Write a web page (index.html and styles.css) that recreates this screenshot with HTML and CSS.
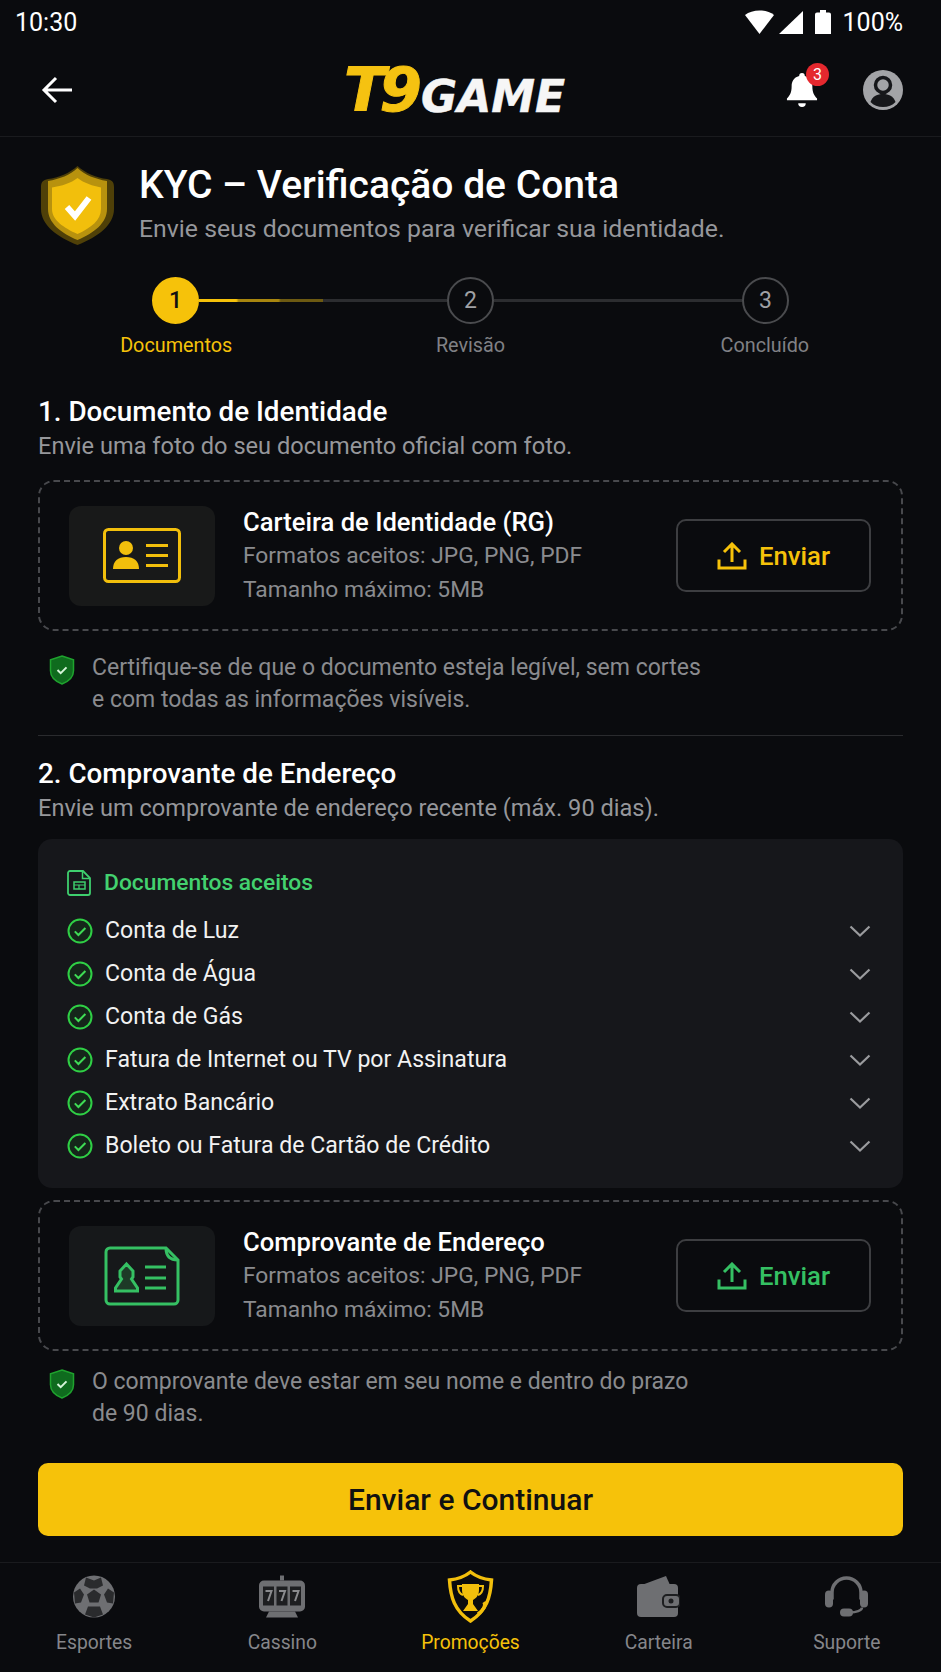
FILE: index.html
```html
<!DOCTYPE html>
<html lang="pt-BR">
<head>
  <meta charset="UTF-8">
  <title>KYC - Verificação de Conta</title>
  <link rel="stylesheet" href="styles.css">
</head>
<body>
  <svg class="defs" width="0" height="0">
    <defs>
      <symbol id="ok-shield" viewBox="0 0 26 30">
        <path d="M13 1l11.500 3.800v11c0 6-4.500 10.500-11.500 13.200C6 26.300 1.500 21.800 1.500 15.800v-11z" fill="#0f6b1e" stroke="#1fa32e" stroke-width="1.500"/>
        <path d="M8.500 15l3.200 3.200 5.800-5.800" fill="none" stroke="#d6f5da" stroke-width="2"/>
      </symbol>
      <symbol id="check" viewBox="0 0 26 26">
        <circle cx="13" cy="13" r="11.500" fill="#15261a" stroke="#2fcf45" stroke-width="2"/>
        <path d="M7.800 13.400l3.600 3.600 7-7" fill="none" stroke="#3fdc55" stroke-width="2"/>
      </symbol>
      <symbol id="chev" viewBox="0 0 22 14">
        <path d="M1.500 2.500l9.500 9 9.500-9" fill="none" stroke="#9a9b9e" stroke-width="2.200"/>
      </symbol>
      <symbol id="upload" viewBox="0 0 30 28">
        <path d="M15 20V3M7 10l8-8 8 8" fill="none" stroke="currentColor" stroke-width="3"/>
        <path d="M2 17.500V26h26v-8.500" fill="none" stroke="currentColor" stroke-width="3"/>
      </symbol>
    </defs>
  </svg>

  <div class="app">
    <!-- Status bar -->
    <div class="status">
      <span>10:30</span>
      <div class="status-right">
        <svg class="wifi" width="29" height="24" viewBox="0 0 29 24"><path d="M0 5C7-1 22-1 29 5L14.500 24z" fill="#fff"/></svg>
        <svg class="signal" width="24" height="23" viewBox="0 0 24 23"><path d="M24 0v23H0z" fill="#fff"/></svg>
        <svg class="batt" width="16" height="24" viewBox="0 0 16 24"><path d="M5 2.500V0h6v2.500h3a2 2 0 0 1 2 2V24H0V4.500a2 2 0 0 1 2-2z" fill="#fff"/></svg>
        <span>100%</span>
      </div>
    </div>

    <!-- Top bar -->
    <header class="topbar">
      <svg class="back" width="32" height="28" viewBox="0 0 32 28"><path d="M31 14H3M15 2L3 14l12 12" fill="none" stroke="#fff" stroke-width="3"/></svg>
      <div class="logo"><span class="logo-t9">T9</span><span class="logo-game">GAME</span></div>
      <div class="top-icons">
        <div class="bell">
          <svg width="32" height="36" viewBox="0 0 34 38"><path d="M17 1c2 0 3 1.400 3 3 6 1.500 8 6 8 11 0 7 2 10 5 13v2H1v-2c3-3 5-6 5-13 0-5 2-9.500 8-11 0-1.600 1-3 3-3z" fill="#fff"/><path d="M13 33h8a4 4 0 0 1-8 0z" fill="#fff"/></svg>
          <span class="badge">3</span>
        </div>
        <svg width="40" height="40" viewBox="0 0 40 40">
          <circle cx="20" cy="20" r="20" fill="#a3a4a7"/>
          <circle cx="20" cy="15" r="7.500" fill="none" stroke="#16171a" stroke-width="3.500"/>
          <path d="M7.500 32c2-6 7-8 12.500-8s10.500 2 12.500 8c-3 3.500-7.500 5-12.500 5s-9.500-1.500-12.500-5z" fill="#16171a"/>
        </svg>
      </div>
    </header>

    <main class="content">
      <div class="page-head">
        <svg class="head-shield" width="73" height="79" viewBox="0 0 73 79">
          <path d="M36.500 0C44 7 56 12 66 13c5 1 7 3 7 8v22c0 16-16 28-36.500 36C16 71 0 59 0 43V21c0-5 2-7 7-8C17 12 29 7 36.500 0z" fill="#4f4008"/>
          <path d="M36.500 2C44 9 54 13 66 15v28c0 14-13 24-29.500 31C20 67 7 57 7 43V15C19 13 29 9 36.500 2z" fill="#b8920e"/>
          <path d="M36.500 12C43 17 52 20 60 21.500V43c0 11-10 19-23.500 25C23 62 11 54 11 43V21.500C21 20 30 17 36.500 12z" fill="#f2bf0c"/>
          <path d="M26 41l8 9 14-18" fill="none" stroke="#fff" stroke-width="6"/>
        </svg>
        <div>
          <h1>KYC – Verificação de Conta</h1>
          <p class="page-sub">Envie seus documentos para verificar sua identidade.</p>
        </div>
      </div>

      <!-- Stepper -->
      <div class="stepper">
        <div class="dots">
          <span class="dot dot-on">1</span>
          <span class="step-line step-line-on"></span>
          <span class="dot">2</span>
          <span class="step-line"></span>
          <span class="dot">3</span>
        </div>
        <div class="step-labels">
          <span class="label-on">Documentos</span>
          <span>Revisão</span>
          <span>Concluído</span>
        </div>
      </div>

      <!-- Section 1 -->
      <h2 class="first">1. Documento de Identidade</h2>
      <p class="section-sub">Envie uma foto do seu documento oficial com foto.</p>

      <div class="upload-card">
        <div class="doc-box">
          <svg width="78" height="55" viewBox="0 0 78 55">
            <rect x="1.500" y="1.500" width="75" height="52" rx="4" fill="none" stroke="#f2bf0c" stroke-width="3"/>
            <circle cx="23" cy="20" r="7" fill="#f2bf0c"/>
            <path d="M10 41c0-8 5-12 13-12s13 4 13 12z" fill="#f2bf0c"/>
            <path d="M43 17.500h22M43 27.500h22M43 37.500h22" stroke="#f2bf0c" stroke-width="3"/>
          </svg>
        </div>
        <div class="doc-info">
          <h3>Carteira de Identidade (RG)</h3>
          <p>Formatos aceitos: JPG, PNG, PDF</p>
          <p>Tamanho máximo: 5MB</p>
        </div>
        <button class="send">
          <svg width="30" height="28"><use href="#upload"/></svg>
          Enviar
        </button>
      </div>

      <div class="note">
        <svg width="26" height="30"><use href="#ok-shield"/></svg>
        <p>Certifique-se de que o documento esteja legível, sem cortes<br>e com todas as informações visíveis.</p>
      </div>

      <hr class="divider">

      <!-- Section 2 -->
      <h2>2. Comprovante de Endereço</h2>
      <p class="section-sub">Envie um comprovante de endereço recente (máx. 90 dias).</p>

      <div class="accepted">
        <div class="accepted-head">
          <svg width="24" height="26" viewBox="0 0 24 26">
            <path d="M3 1h13l7 7v15a2 2 0 0 1-2 2H3a2 2 0 0 1-2-2V3a2 2 0 0 1 2-2z" fill="none" stroke="#3ecf6e" stroke-width="1.800"/>
            <path d="M15.500 1.500V8.500H22.500" fill="none" stroke="#3ecf6e" stroke-width="1.500"/>
            <rect x="7" y="12" width="11" height="7" fill="none" stroke="#3ecf6e" stroke-width="1.500"/>
            <path d="M7 15h11M12 15v4" stroke="#3ecf6e" stroke-width="1.200"/>
          </svg>
          <span>Documentos aceitos</span>
        </div>
        <ul class="accepted-list">
          <li><svg width="26" height="26"><use href="#check"/></svg><span>Conta de Luz</span><svg width="22" height="14"><use href="#chev"/></svg></li>
          <li><svg width="26" height="26"><use href="#check"/></svg><span>Conta de Água</span><svg width="22" height="14"><use href="#chev"/></svg></li>
          <li><svg width="26" height="26"><use href="#check"/></svg><span>Conta de Gás</span><svg width="22" height="14"><use href="#chev"/></svg></li>
          <li><svg width="26" height="26"><use href="#check"/></svg><span>Fatura de Internet ou TV por Assinatura</span><svg width="22" height="14"><use href="#chev"/></svg></li>
          <li><svg width="26" height="26"><use href="#check"/></svg><span>Extrato Bancário</span><svg width="22" height="14"><use href="#chev"/></svg></li>
          <li><svg width="26" height="26"><use href="#check"/></svg><span>Boleto ou Fatura de Cartão de Crédito</span><svg width="22" height="14"><use href="#chev"/></svg></li>
        </ul>
      </div>

      <div class="upload-card upload-card-2">
        <div class="doc-box">
          <svg width="76" height="60" viewBox="0 0 76 60">
            <path d="M6 2h56l12 12v40a4 4 0 0 1-4 4H6a4 4 0 0 1-4-4V6a4 4 0 0 1 4-4z" fill="none" stroke="#35c063" stroke-width="3"/>
            <path d="M62 2c0 8 4 12 12 12" fill="none" stroke="#35c063" stroke-width="3"/>
            <path d="M22.500 18l6.500 7v6l-1.500 2 6 9v3H11.500v-3l6-9-1.500-2v-6z" fill="#1d3a27" stroke="#35c063" stroke-width="3"/>
            <path d="M41 21h21M41 32h21M41 42h21" stroke="#35c063" stroke-width="3"/>
          </svg>
        </div>
        <div class="doc-info">
          <h3>Comprovante de Endereço</h3>
          <p>Formatos aceitos: JPG, PNG, PDF</p>
          <p>Tamanho máximo: 5MB</p>
        </div>
        <button class="send send-green">
          <svg width="30" height="28"><use href="#upload"/></svg>
          Enviar
        </button>
      </div>

      <div class="note note-2">
        <svg width="26" height="30"><use href="#ok-shield"/></svg>
        <p>O comprovante deve estar em seu nome e dentro do prazo<br>de 90 dias.</p>
      </div>

      <button class="continue">Enviar e Continuar</button>
    </main>

    <!-- Bottom nav -->
    <nav class="bottom-nav">
      <div class="nav-item">
        <svg width="42" height="42" viewBox="0 0 42 42">
          <circle cx="21" cy="21" r="21" fill="#6e6f72"/>
          <path d="M21 14l7 5-2.500 8h-9L14 19z" fill="#2a2b2d"/>
          <path d="M13 2l8 3 7-3 2 8-6 3h-7l-6-3zM1 17l6-4 4 6-3 8-6 1zM41 17l-6-4-4 6 3 8 6 1zM12 39l3-8h12l3 8-9 3z" fill="#2a2b2d"/>
        </svg>
        <span>Esportes</span>
      </div>
      <div class="nav-item">
        <svg width="46" height="42" viewBox="0 0 46 42">
          <path d="M21 0h4v5h-4z" fill="#6e6f72"/>
          <rect x="0" y="5" width="46" height="31" rx="5" fill="#6e6f72"/>
          <path d="M10 36h26l3 6H7z" fill="#6e6f72"/>
          <rect x="4" y="11" width="11" height="19" fill="#1d1e20"/>
          <rect x="17.500" y="11" width="11" height="19" fill="#1d1e20"/>
          <rect x="31" y="11" width="11" height="19" fill="#1d1e20"/>
          <path d="M6.500 15.500h6l-3.500 10M20 15.500h6l-3.500 10M33.500 15.500h6l-3.500 10" fill="none" stroke="#8a8b8e" stroke-width="2"/>
        </svg>
        <span>Cassino</span>
      </div>
      <div class="nav-item nav-item-on">
        <svg width="49" height="53" viewBox="0 0 49 53">
          <path d="M24.500 2c5 4 12 7 21 8-1 17-5 31-21 41C8.500 41 4.500 27 3.500 10c9-1 16-4 21-8z" fill="none" stroke="#f2bf0c" stroke-width="3.500"/>
          <path d="M16 14h17v6c0 6-4 9-6 10v4l5 7H17l5-7v-4c-2-1-6-4-6-10z" fill="#f2bf0c"/>
          <path d="M16 16h-4c0 5 2 8 5 9M33 16h4c0 5-2 8-5 9" fill="none" stroke="#f2bf0c" stroke-width="2"/>
          <path d="M38 32c2 3 0 8-6 12" fill="none" stroke="#f2bf0c" stroke-width="3.500"/>
        </svg>
        <span>Promoções</span>
      </div>
      <div class="nav-item">
        <svg width="43" height="41" viewBox="0 0 43 41">
          <path d="M2 10L29 0l4 9z" fill="#6e6f72"/>
          <rect x="0" y="8" width="41" height="33" rx="4" fill="#6e6f72"/>
          <rect x="26" y="19" width="17" height="12" rx="4" fill="#6e6f72" stroke="#1d1e20" stroke-width="2"/>
          <circle cx="34" cy="25" r="2.500" fill="#1d1e20"/>
        </svg>
        <span>Carteira</span>
      </div>
      <div class="nav-item">
        <svg width="43" height="42" viewBox="0 0 43 42">
          <path d="M7 24V17a14.500 14.500 0 0 1 29 0v7" fill="none" stroke="#6e6f72" stroke-width="3.500"/>
          <rect x="0" y="15" width="8" height="17" rx="4" fill="#6e6f72"/>
          <rect x="35" y="15" width="8" height="17" rx="4" fill="#6e6f72"/>
          <path d="M37 32c0 3-6 5-12 5" fill="none" stroke="#6e6f72" stroke-width="2.500"/>
          <rect x="15" y="33" width="13" height="8" rx="4" fill="#6e6f72"/>
        </svg>
        <span>Suporte</span>
      </div>
    </nav>
  </div>
</body>
</html>
```

FILE: styles.css
```css
* {
  box-sizing: border-box;
}
body {
  margin: 0;
  background: #0a0b0e;
  font-family: Roboto, "Liberation Sans", sans-serif;
  color: #fff;
}
h1, h2, h3, p, ul {
  margin: 0;
  padding: 0;
}
.defs {
  display: block;
  height: 0;
}
.app {
  width: 941px;
  height: 1672px;
  display: flex;
  flex-direction: column;
  overflow: hidden;
}

/* status + top bar */
.status {
  height: 44px;
  padding: 0 38px 0 15px;
  display: flex;
  align-items: center;
  justify-content: space-between;
  font-size: 25px;
}
.status-right {
  display: flex;
  align-items: center;
  gap: 12px;
}
.wifi {
  margin-right: -7px;
}
.topbar {
  height: 93px;
  padding: 0 38px 0 41px;
  display: flex;
  align-items: center;
  justify-content: space-between;
  border-bottom: 1px solid #1a1b1e;
}
.logo {
  display: flex;
  align-items: flex-end;
  font-family: "DejaVu Sans", sans-serif;
  font-style: italic;
  font-weight: 700;
  margin-left: 50px;
  height: 50px;
}
.logo-t9 {
  font-size: 61px;
  line-height: 50px;
  color: #f5c211;
  letter-spacing: -6px;
  -webkit-text-stroke: 1px #f5c211;
}
.logo-game {
  margin-left: 5px;
  font-size: 44px;
  line-height: 36px;
  color: #f6f6f6;
  -webkit-text-stroke: 0.5px #f6f6f6;
}
.top-icons {
  display: flex;
  align-items: center;
  gap: 45px;
}
.bell {
  position: relative;
  display: flex;
}
.badge {
  position: absolute;
  top: -9px;
  right: -11px;
  width: 23px;
  height: 23px;
  border-radius: 50%;
  background: #e5282e;
  font-size: 16px;
  line-height: 23px;
  text-align: center;
}

/* page head */
.content {
  flex: 1;
  padding: 0 38px;
}
.page-head {
  display: flex;
  gap: 25px;
  padding: 26px 0 0 3px;
}
.head-shield {
  margin-top: 3px;
  flex: none;
}
h1 {
  font-size: 39px;
  font-weight: 500;
  line-height: 44px;
}
.page-sub {
  margin-top: 6px;
  font-size: 24.800px;
  line-height: 32px;
  color: #96979b;
}

/* stepper */
.stepper {
  margin: 32px -9px 0;
}
.dots {
  display: flex;
  align-items: center;
  padding: 0 123px;
}
.dot {
  flex: none;
  width: 47px;
  height: 47px;
  border-radius: 50%;
  border: 2px solid #4a4b4e;
  display: flex;
  align-items: center;
  justify-content: center;
  font-size: 23px;
  color: #a0a1a4;
}
.dot-on {
  background: #f6c20a;
  border-color: #f6c20a;
  color: #111;
  font-weight: 500;
}
.step-line {
  flex: 1;
  height: 3px;
  background: #2c2d30;
}
.step-line-on {
  background: linear-gradient(to right, #f6c20a 0, #f6c20a 15%, #a8860f 16%, #a8860f 32%, #6d5a12 33%, #6d5a12 50%, #2c2d30 50%);
}
.step-labels {
  margin-top: 10px;
  display: grid;
  grid-template-columns: repeat(3, 1fr);
  text-align: center;
  font-size: 19.800px;
  line-height: 24px;
  color: #808185;
}
.label-on {
  color: #f6c20a;
}

/* sections */
h2 {
  margin-top: 22px;
  font-size: 27.800px;
  font-weight: 500;
  line-height: 32px;
}
h2.first {
  margin-top: 38px;
}
.section-sub {
  margin-top: 3px;
  font-size: 23.600px;
  line-height: 30px;
  color: #96979b;
}
.upload-card {
  margin-top: 19px;
  height: 151px;
  padding: 0 30px 0 29px;
  display: flex;
  align-items: center;
  border: 2px dashed #48494d;
  border-radius: 16px;
}
.upload-card-2 {
  margin-top: 12px;
}
.doc-box {
  flex: none;
  width: 146px;
  height: 100px;
  border-radius: 12px;
  background: #181919;
  display: flex;
  align-items: center;
  justify-content: center;
}
.upload-card-2 .doc-box {
  background: #16181a;
}
.doc-info {
  margin-left: 28px;
}
.doc-info h3 {
  font-size: 25.600px;
  font-weight: 500;
  line-height: 34px;
}
.doc-info p {
  font-size: 22.800px;
  line-height: 34px;
  color: #8a8b8f;
}
.send {
  margin-left: auto;
  width: 195px;
  height: 73px;
  border: 2px solid #3d3e41;
  border-radius: 10px;
  background: none;
  display: flex;
  align-items: center;
  justify-content: center;
  gap: 12px;
  font-family: inherit;
  font-size: 25.700px;
  font-weight: 500;
  color: #f6c20a;
}
.send-green {
  color: #35c063;
}
.note {
  margin-top: 21px;
  padding-left: 11px;
  display: flex;
  gap: 17px;
  font-size: 23px;
  line-height: 32px;
  color: #8a8b8f;
}
.note svg {
  flex: none;
  margin-top: 3px;
}
.note-2 {
  margin-top: 15px;
}
.divider {
  margin: 19px 0 0;
  height: 1px;
  border: 0;
  background: #2a2b2e;
}

/* accepted documents */
.accepted {
  margin-top: 16px;
  height: 349px;
  padding: 28px 32px 20px 29px;
  background: #16171b;
  border-radius: 14px;
}
.accepted-head {
  display: flex;
  align-items: center;
  gap: 13px;
  font-size: 22.800px;
  font-weight: 500;
  line-height: 32px;
  color: #43d16f;
}
.accepted-list {
  margin-top: 10px;
  list-style: none;
}
.accepted-list li {
  height: 43px;
  display: flex;
  align-items: center;
  gap: 12px;
  font-size: 23.100px;
  color: #f2f2f2;
}
.accepted-list li span {
  flex: 1;
}

/* main action */
.continue {
  margin-top: 33px;
  width: 100%;
  height: 73px;
  border: 0;
  border-radius: 10px;
  background: #f6c20a;
  font-family: inherit;
  font-size: 30px;
  font-weight: 500;
  color: #111;
}

/* bottom nav */
.bottom-nav {
  height: 110px;
  border-top: 1px solid #1a1b1e;
  display: grid;
  grid-template-columns: repeat(5, 1fr);
}
.nav-item {
  padding-top: 7px;
  display: flex;
  flex-direction: column;
  align-items: center;
  font-size: 19.300px;
  line-height: 24px;
  color: #85868a;
}
.nav-item svg {
  height: 53px;
  flex: none;
  align-self: center;
  margin-bottom: 8px;
}
.nav-item-on {
  color: #f6c20a;
}
```
